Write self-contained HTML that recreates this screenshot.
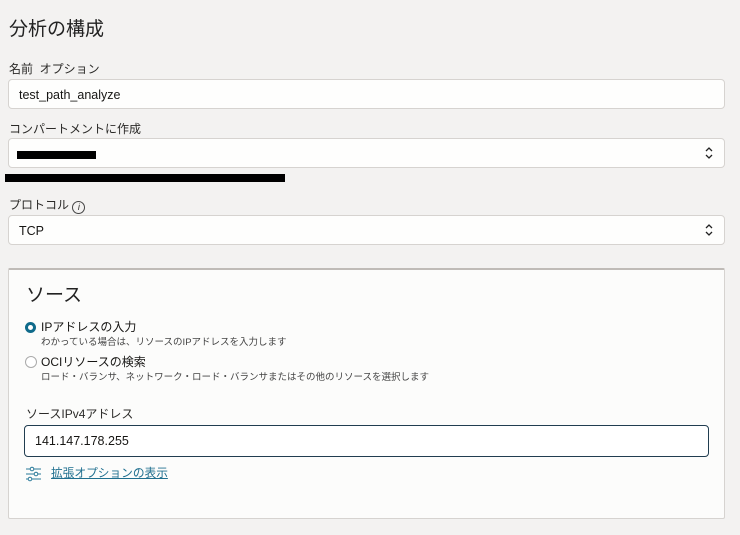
<!DOCTYPE html>
<html><head><meta charset="utf-8"><style>
body{margin:0;width:740px;height:535px;background:#f3f2f1;font-family:"Liberation Sans","Noto Sans CJK JP",sans-serif;color:#161513;position:relative;overflow:hidden;line-height:1.15}
.a{position:absolute}
.inp{position:absolute;left:8px;width:717px;height:28px;background:#fefefd;border:1px solid #d6d3d0;border-radius:4px;box-sizing:border-box}
.inp span{position:absolute;left:10px;top:8px;font-size:12.5px}
.lbl{position:absolute;left:9px;font-size:12px;color:#2b2a28}
.chev{position:absolute;right:10px;top:7px}
</style></head><body>
<div class="a" style="left:9px;top:19px;font-size:19px;color:#222">分析の構成</div>
<div class="lbl" style="top:63px">名前&nbsp; オプション</div>
<div class="inp" style="top:79px;height:30px"><span>test_path_analyze</span></div>
<div class="lbl" style="top:123px">コンパートメントに作成</div>
<div class="inp" style="top:138px;height:30px"><div class="a" style="left:8px;top:12px;width:79px;height:8px;background:#000"></div>
<svg class="chev" width="10" height="14" viewBox="0 0 10 14"><path d="M2 5l3-3 3 3M2 9l3 3 3-3" fill="none" stroke="#222" stroke-width="1.3"/></svg></div>
<div class="a" style="left:5px;top:174px;width:280px;height:8px;background:#000"></div>
<div class="lbl" style="top:199px">プロトコル <span style="display:inline-block;width:11px;height:11px;border:1px solid #444;border-radius:50%;font-size:9px;text-align:center;line-height:11px;font-style:italic;vertical-align:-1px">i</span></div>
<div class="inp" style="top:215px;height:30px"><span>TCP</span>
<svg class="chev" width="10" height="14" viewBox="0 0 10 14"><path d="M2 5l3-3 3 3M2 9l3 3 3-3" fill="none" stroke="#222" stroke-width="1.3"/></svg></div>
<div class="a" style="left:8px;top:268px;width:717px;height:251px;background:#fcfcfb;border:1px solid #d6d3d0;border-top:2px solid #bfbbb7;box-sizing:border-box;border-radius:2px"></div>
<div class="a" style="left:26px;top:285px;font-size:19px;color:#222">ソース</div>
<div class="a" style="left:25px;top:322px;width:11px;height:11px;border-radius:50%;background:#0f6a8a;box-sizing:border-box"><div class="a" style="left:3px;top:3px;width:5px;height:5px;border-radius:50%;background:#fff"></div></div>
<div class="a" style="left:41px;top:321px;font-size:12px">IPアドレスの入力</div>
<div class="a" style="left:41px;top:338px;font-size:9.5px;color:#444">わかっている場合は、リソースのIPアドレスを入力します</div>
<div class="a" style="left:25px;top:356px;width:12px;height:12px;border-radius:50%;border:1px solid #aaa;box-sizing:border-box;background:#fff"></div>
<div class="a" style="left:41px;top:356px;font-size:12px">OCIリソースの検索</div>
<div class="a" style="left:41px;top:373px;font-size:9.5px;color:#444">ロード・バランサ、ネットワーク・ロード・バランサまたはその他のリソースを選択します</div>
<div class="a" style="left:26px;top:408px;font-size:12px;color:#2b2a28">ソースIPv4アドレス</div>
<div class="a" style="left:24px;top:425px;width:685px;height:32px;border:1.5px solid #213d50;border-radius:4px;box-sizing:border-box;background:#fff"><span class="a" style="left:10px;top:8px;font-size:12.5px">141.147.178.255</span></div>
<svg class="a" style="left:26px;top:466px" width="15" height="16" viewBox="0 0 15 16"><g fill="none" stroke="#2a7a9a" stroke-width="1"><path d="M0 3h4M8 3h7M0 8h8M12 8h3M0 13h2M6 13h9"/><circle cx="6" cy="3" r="1.8"/><circle cx="10" cy="8" r="1.8"/><circle cx="4" cy="13" r="1.8"/></g></svg>
<div class="a" style="left:51px;top:467px;font-size:11.7px;color:#1f6f8f;text-decoration:underline">拡張オプションの表示</div>
</body></html>
